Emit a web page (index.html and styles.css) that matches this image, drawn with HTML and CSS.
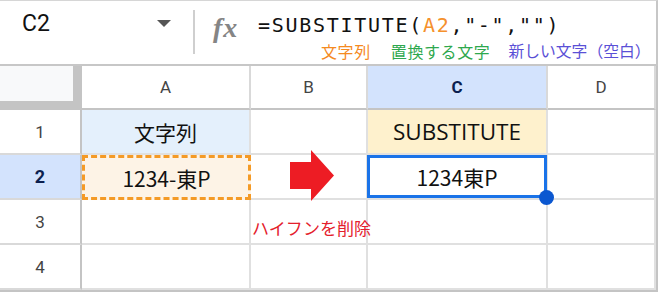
FILE: index.html
```html
<!DOCTYPE html>
<html lang="ja">
<head>
<meta charset="utf-8">
<link rel="stylesheet" href="styles.css">
</head>
<body>
<div class="app">
  <div class="formula-bar">
    <div class="name-box">
      <span class="cell-ref">C2</span>
      <span class="caret"></span>
    </div>
    <div class="divider"></div>
    <div class="fx"><span class="fx-f">f</span><span class="fx-x">x</span></div>
    <div class="formula-area">
      <div class="formula">=SUBSTITUTE(<span class="ref">A2</span>,"-","")</div>
      <div class="labels">
        <span class="lbl lbl-orange">文字列</span>
        <span class="lbl lbl-green">置換する文字</span>
        <span class="lbl lbl-purple">新しい文字（空白）</span>
      </div>
    </div>
  </div>

  <div class="sheet">
    <div class="corner"><div class="corner-inner"></div></div>
    <div class="col-head">A</div>
    <div class="col-head">B</div>
    <div class="col-head col-active">C</div>
    <div class="col-head">D</div>

    <div class="row-head">1</div>
    <div class="cell cell-blue">文字列</div>
    <div class="cell"></div>
    <div class="cell cell-yellow"><span class="latin">SUBSTITUTE</span></div>
    <div class="cell"></div>

    <div class="row-head row-active">2</div>
    <div class="cell cell-source">1234-東P</div>
    <div class="cell"></div>
    <div class="cell cell-selected">1234東P<span class="handle"></span></div>
    <div class="cell"></div>

    <div class="row-head">3</div>
    <div class="cell"></div>
    <div class="cell cell-note"><span class="note">ハイフンを削除</span></div>
    <div class="cell"></div>
    <div class="cell"></div>

    <div class="row-head">4</div>
    <div class="cell"></div>
    <div class="cell"></div>
    <div class="cell"></div>
    <div class="cell"></div>

    <svg class="arrow" width="44" height="51" viewBox="0 0 44 51">
      <polygon points="0,12 21,12 21,0 44,25.5 21,51 21,39 0,39" fill="#ed1c24"/>
    </svg>
  </div>
</div>
</body>
</html>
```

FILE: styles.css
```css
* { box-sizing: border-box; }

html, body {
  margin: 0;
  padding: 0;
  background: #ffffff;
}

.app {
  width: 658px;
}

/* ---------- formula bar ---------- */
.formula-bar {
  height: 66px;
  display: flex;
  align-items: stretch;
  border-top: 1px solid #d6d6d6;
  border-right: 2px solid #c7c7c7;
  border-bottom: 2px solid #c7c7c7;
  font-family: Roboto, "Noto Sans CJK JP", sans-serif;
}

.name-box {
  width: 193px;
  display: flex;
  align-items: flex-start;
  padding: 8px 0 0 22px;
}

.cell-ref {
  font-size: 23px;
  line-height: 30px;
  color: #111;
  width: 135px;
}

.caret {
  margin-top: 11px;
  width: 0;
  height: 0;
  border-left: 7px solid transparent;
  border-right: 7px solid transparent;
  border-top: 7px solid #555;
}

.divider {
  width: 2px;
  margin: 9px 0 10px;
  background: #cfcfcf;
}

.fx {
  width: 63px;
  padding: 12px 0 0 18px;
  font-family: "Liberation Serif", "DejaVu Serif", serif;
  color: #858585;
  font-size: 28px;
  line-height: 30px;
  font-weight: bold;
}

.fx-f {
  font-style: italic;
}

.fx-x {
  font-style: italic;
  margin-left: 1px;
}

.formula-area {
  display: flex;
  flex-direction: column;
}

.formula {
  padding-top: 10px;
  font-family: "DejaVu Sans Mono", monospace;
  font-size: 20px;
  letter-spacing: 1.7px;
  line-height: 28px;
  color: #111;
  white-space: nowrap;
}

.ref {
  color: #f5912d;
}

.labels {
  display: flex;
  padding-left: 63px;
  margin-top: 2px;
  font-family: "Noto Sans CJK JP", sans-serif;
  font-size: 16px;
  line-height: 20px;
  letter-spacing: 0.6px;
  white-space: nowrap;
}

.lbl-orange { color: #f58a1f; margin-right: 20px; }
.lbl-green { color: #2ea84e; margin-right: 18px; }
.lbl-purple { color: #5a50d6; letter-spacing: 0; font-size: 15.8px; }

/* ---------- sheet grid ---------- */
.sheet {
  position: relative;
  display: grid;
  grid-template-columns: 82px 169px 117px 180px 108px;
  grid-template-rows: 44px 45px 45px 45px 45px;
  width: 658px;
  border-right: 2px solid #c4c4c4;
  border-bottom: 2px solid #c4c4c4;
}

.corner {
  background: #c4c4c4;
  padding-bottom: 8px;
}

.corner-inner {
  width: 73px;
  height: 35px;
  background: #f8f9fa;
}

.col-head {
  display: flex;
  align-items: center;
  justify-content: center;
  background: #ffffff;
  border-right: 2px solid #d9d9d9;
  border-bottom: 2px solid #c4c4c4;
  font-family: Roboto, "Liberation Sans", sans-serif;
  font-size: 17px;
  color: #444;
}

.col-active {
  background: #d3e3fd;
  color: #0b1f4f;
  font-weight: bold;
}

.row-head {
  display: flex;
  align-items: center;
  justify-content: center;
  background: #ffffff;
  border-right: 2px solid #c4c4c4;
  border-bottom: 2px solid #d9d9d9;
  font-family: Roboto, "Liberation Sans", sans-serif;
  font-size: 17px;
  color: #444;
}

.row-active {
  background: #d3e3fd;
  color: #0b1f4f;
  font-weight: bold;
  font-size: 18px;
}

.cell {
  position: relative;
  display: flex;
  align-items: center;
  justify-content: center;
  border-right: 2px solid #e0e0e0;
  border-bottom: 2px solid #e0e0e0;
  font-family: "Noto Sans CJK JP", sans-serif;
  font-size: 21px;
  color: #111;
  white-space: nowrap;
}

.cell-blue {
  background: #e4f0fc;
}

.cell-yellow {
  background: #fef1cd;
}

.latin {
  font-family: "Open Sans", "Noto Sans", sans-serif;
  font-size: 22.5px;
}

.cell-source {
  background: #fdf3e6;
  border: 3px dashed #f49a26;
}

.cell-selected::after {
  content: "";
  position: absolute;
  top: 0;
  left: -1px;
  right: -1px;
  bottom: 0;
  border: 3px solid #1a73e8;
}

.handle {
  position: absolute;
  right: -8px;
  bottom: -7px;
  width: 15px;
  height: 15px;
  border-radius: 50%;
  background: #0b57d0;
  z-index: 2;
}

.cell-note {
  justify-content: flex-start;
  align-items: flex-start;
  overflow: visible;
  z-index: 1;
}

.note {
  padding: 17px 0 0 1px;
  font-size: 17px;
  line-height: 22px;
  color: #e4202c;
}

.arrow {
  position: absolute;
  left: 290px;
  top: 84px;
  z-index: 3;
}
```
